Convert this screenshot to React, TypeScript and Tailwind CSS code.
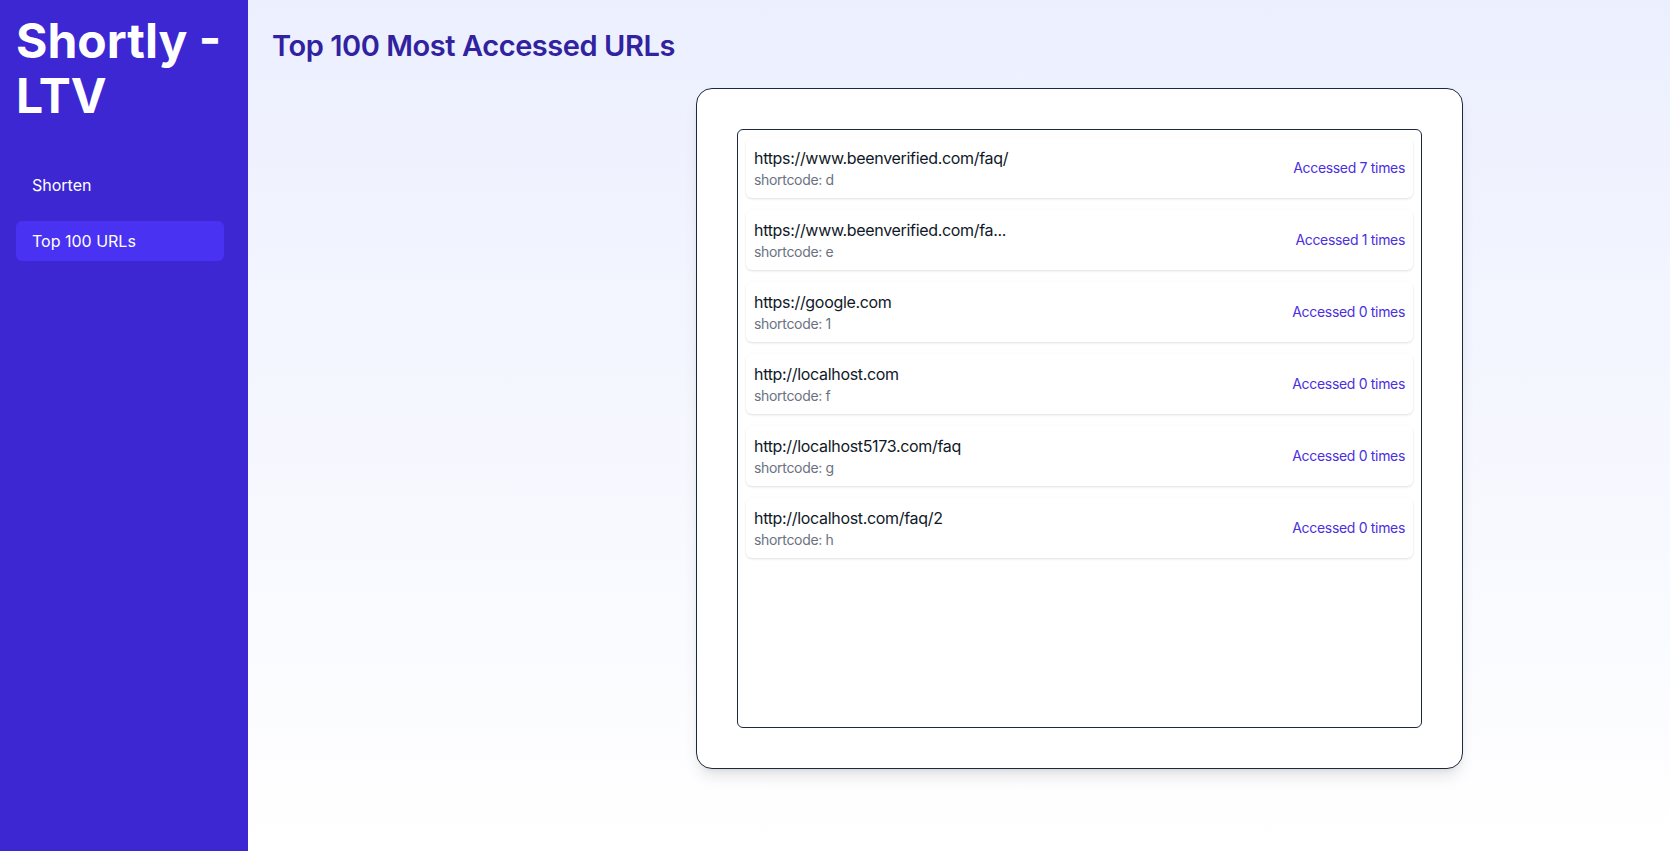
import React from "react";

type UrlItem = {
  url: string;
  shortcode: string;
  count: number;
};

const urls: UrlItem[] = [
  { url: "https://www.beenverified.com/faq/", shortcode: "d", count: 7 },
  { url: "https://www.beenverified.com/fa...", shortcode: "e", count: 1 },
  { url: "https://google.com", shortcode: "1", count: 0 },
  { url: "http://localhost.com", shortcode: "f", count: 0 },
  { url: "http://localhost5173.com/faq", shortcode: "g", count: 0 },
  { url: "http://localhost.com/faq/2", shortcode: "h", count: 0 },
];

const Sidebar = () => (
  <aside className="w-[248px] shrink-0 bg-[#3d27d3] pt-[13px] pl-4 pr-6 min-h-screen">
    <h1 className="text-5xl leading-[55px] font-bold text-white mb-[42px]">Shortly - LTV</h1>
    <nav className="flex flex-col gap-4">
      <a className="block rounded-md px-4 py-2 text-base text-white">Shorten</a>
      <a className="block rounded-md px-4 py-2 text-base text-white bg-[#4a32f2]">Top 100 URLs</a>
    </nav>
  </aside>
);

const App = () => {
  return (
    <div
      className="flex min-h-screen"
      style={{ fontFamily: "Inter, 'Noto Sans', sans-serif" }}
    >
      <Sidebar />
      <main className="flex-1 bg-linear-to-b from-[#eceffe] to-white px-6 pt-7">
        <h2 className="text-[29px] leading-9 font-semibold tracking-[-0.015em] text-[#3122a0]">
          Top 100 Most Accessed URLs
        </h2>

        <div className="mt-6 ml-[424px] w-[767px] rounded-2xl border border-slate-800 bg-white p-10 shadow-lg">
          <div className="h-[599px] overflow-auto rounded-md border border-slate-800 p-2">
            <ul className="flex flex-col gap-3 tracking-[-0.02em]">
              {urls.map((item) => (
                <li
                  key={item.shortcode}
                  className="flex items-center justify-between rounded-md bg-white p-2 shadow-sm"
                >
                  <div>
                    <p className="text-base leading-6 text-gray-900">{item.url}</p>
                    <p className="text-sm leading-5 text-gray-500">shortcode: {item.shortcode}</p>
                  </div>
                  <span className="text-sm text-[#4a2fe0]">Accessed {item.count} times</span>
                </li>
              ))}
            </ul>
          </div>
        </div>
      </main>
    </div>
  );
};

export default App;
